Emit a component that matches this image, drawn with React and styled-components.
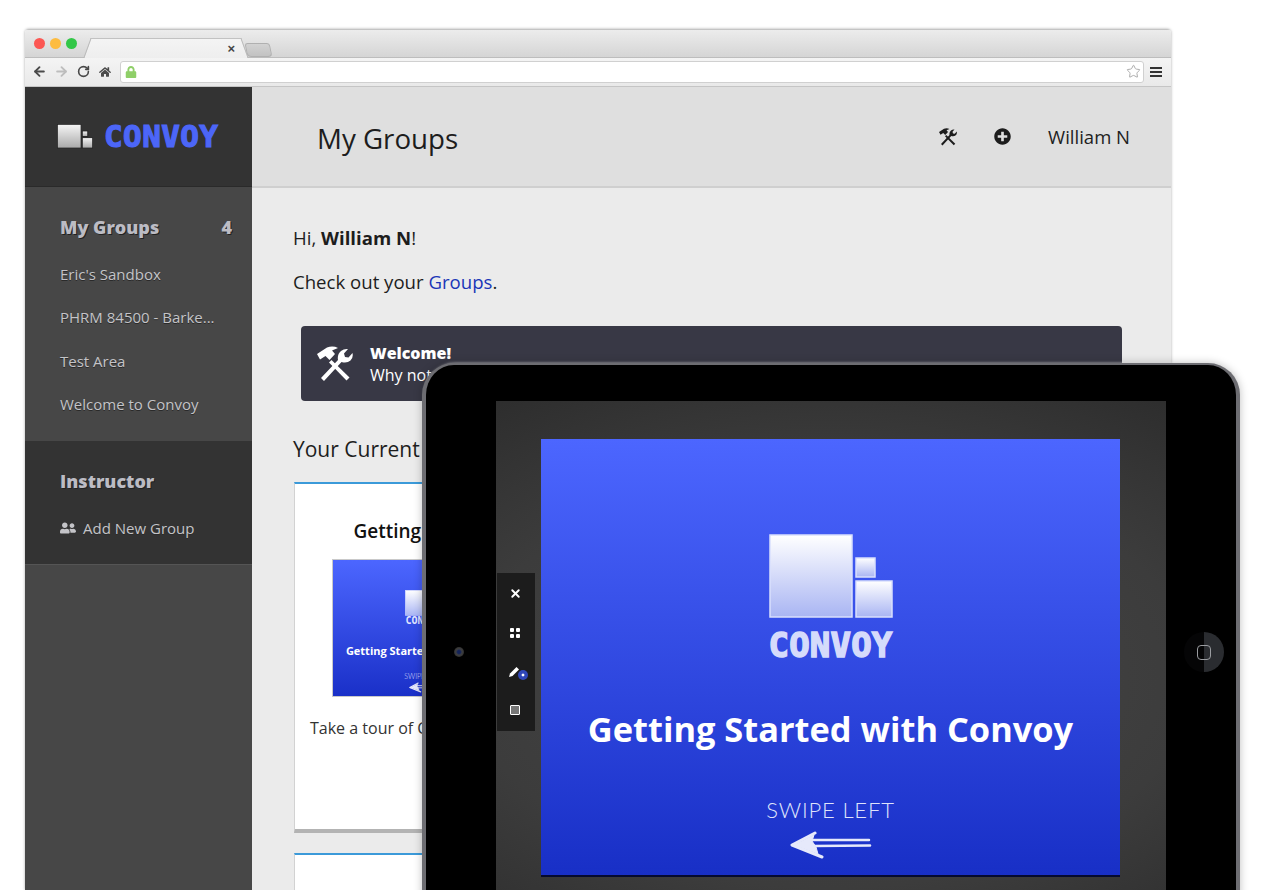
import React from 'react';
import styled, { createGlobalStyle } from 'styled-components';
import { ArrowLeft, ArrowRight, RotateCw, Star, X } from 'lucide-react';
import { FaHome, FaLock, FaPlusCircle, FaUserFriends } from 'react-icons/fa';

const GlobalStyle = createGlobalStyle`
  html, body {
    margin: 0;
    height: 890px;
    overflow: hidden;
    background: #fff;
    font-family: 'Open Sans', 'Liberation Sans', sans-serif;
  }
  * { box-sizing: border-box; }
`;

const LogoMark = ({ id, from, to, edge, width, edgeWidth = 1.5 }) => (
  <svg width={width} viewBox="0 0 124 84" style={{ display: 'block', flexShrink: 0 }}>
    <defs>
      <linearGradient id={id} x1="0" y1="0" x2="0" y2="1">
        <stop offset="0" stopColor={from} />
        <stop offset="1" stopColor={to} />
      </linearGradient>
    </defs>
    <g fill={`url(#${id})`} stroke={edge} strokeWidth={edgeWidth}>
      <rect x="1" y="1" width="82" height="82" />
      <rect x="87" y="24" width="19" height="19" />
      <rect x="87" y="47" width="36" height="36" />
    </g>
  </svg>
);

const ToolsIcon = ({ size }) => (
  <svg width={size} height={size} viewBox="0 0 36 36" fill="currentColor" style={{ display: 'block' }}>
    <path d="M0 8 L10 1.5 Q16 -0.5 21 2 L15 4.5 L18 8 L12.5 14 L8.5 10 L3 13.5 Z" />
    <path d="M12 16.5 L14.5 14 L32.5 31.5 L29.5 34.5 Z" />
    <path d="M4 32 L21 14 Q20 8.5 24 5 Q27 2.5 31 3 L27 7.5 L28 11 L31.5 11.5 L35.5 7 Q36.5 12 33.5 14.5 Q30 17.5 24.5 16 L7 35 Z" />
  </svg>
);

const SwipeArrow = ({ width }) => (
  <svg width={width} viewBox="0 0 82 30" fill="none" stroke="#e6e9fb" strokeLinecap="round" strokeLinejoin="round" style={{ display: 'block' }}>
    <path d="M25 3 L2 15 L32 27" strokeWidth="3" />
    <path d="M20 10 L79 10" strokeWidth="2.5" />
    <path d="M24 16 L80 15.5" strokeWidth="2.5" />
    <path d="M4 15 L24 5 L22 11 L26 17 L28 24 Z" fill="#e6e9fb" strokeWidth="1" />
  </svg>
);

const groups = [
  "Eric's Sandbox",
  'PHRM 84500 - Barke...',
  'Test Area',
  'Welcome to Convoy',
];

const App = () => (
  <Stage>
    <GlobalStyle />
    <Browser>
      <TitleBar>
        <Light color="#fc5753" />
        <Light color="#fdbc40" />
        <Light color="#33c748" />
        <Tab>
          <TabClose>×</TabClose>
        </Tab>
        <NewTab />
      </TitleBar>
      <Toolbar>
        <NavIcon>
          <ArrowLeft size={15} strokeWidth={3} color="#4a4a4a" />
        </NavIcon>
        <NavIcon>
          <ArrowRight size={15} strokeWidth={3} color="#bdbdbd" />
        </NavIcon>
        <NavIcon>
          <RotateCw size={13} strokeWidth={3} color="#4a4a4a" />
        </NavIcon>
        <NavIcon>
          <FaHome size={12} color="#4a4a4a" />
        </NavIcon>
        <AddressBar>
          <FaLock size={12} color="#8fcf68" />
          <Star size={15} strokeWidth={1.5} color="#a8a8a8" />
        </AddressBar>
        <Burger>
          <span />
          <span />
          <span />
        </Burger>
      </Toolbar>

      <AppBody>
        <Sidebar>
          <LogoArea>
            <LogoMark id="topLogo" from="#f6f6f6" to="#a9a9a9" edge="#1f1f1f" edgeWidth={3} width={36} />
            <LogoText>CONVOY</LogoText>
          </LogoArea>
          <NavSection>
            <NavHeading>
              My Groups <span>4</span>
            </NavHeading>
            {groups.map(g => (
              <NavItem key={g}>{g}</NavItem>
            ))}
          </NavSection>
          <InstructorSection>
            <NavHeading>Instructor</NavHeading>
            <NavItem>
              <FaUserFriends size={16} /> Add New Group
            </NavItem>
          </InstructorSection>
        </Sidebar>

        <Main>
          <Header>
            <PageTitle>My Groups</PageTitle>
            <HeaderActions>
              <ToolsIcon size={18} />
              <FaPlusCircle size={17} />
              <UserName>William N</UserName>
            </HeaderActions>
          </Header>
          <Content>
            <Greeting>
              Hi, <b>William N</b>!
            </Greeting>
            <Greeting>
              Check out your <GroupLink>Groups</GroupLink>.
            </Greeting>
            <Banner>
              <ToolsIcon size={36} />
              <BannerText>
                <b>Welcome!</b>
                <span>Why not take a tour?</span>
              </BannerText>
            </Banner>
            <SectionTitle>Your Current Groups</SectionTitle>
            <Card>
              <CardTitle>Getting Started</CardTitle>
              <Thumb>
                <LogoMark id="thumbLogo" from="#ffffff" to="#aab6f5" edge="#dfe4ff" width={38} />
                <ThumbLogoText>CONVOY</ThumbLogoText>
                <ThumbTitle>Getting Started with Convoy</ThumbTitle>
                <ThumbSwipe>SWIPE LEFT</ThumbSwipe>
                <SwipeArrow width={30} />
              </Thumb>
              <CardText>Take a tour of Convoy</CardText>
            </Card>
            <Card />
          </Content>
        </Main>
      </AppBody>
    </Browser>

    <Tablet>
      <Bezel>
        <Camera />
      </Bezel>
      <Screen>
        <SlideTools>
          <X size={13} strokeWidth={3.5} color="#fff" />
          <GridIcon>
            <i />
            <i />
            <i />
            <i />
          </GridIcon>
          <PenTool>
            <svg width="11" height="11" viewBox="0 0 11 11" fill="#fff">
              <path d="M0 11 L1 7.5 L7.5 1 L10 3.5 L3.5 10 Z" />
            </svg>
            <PenDot />
          </PenTool>
          <NotesIcon />
        </SlideTools>
        <Slide>
          <LogoMark id="slideLogo" from="#ffffff" to="#a9b5f3" edge="#d9dffd" width={124} />
          <SlideLogoText>CONVOY</SlideLogoText>
          <SlideTitle>Getting Started with Convoy</SlideTitle>
          <SwipeText>SWIPE LEFT</SwipeText>
          <SwipeArrow width={82} />
        </Slide>
      </Screen>
      <Bezel>
        <HomeButton>
          <i />
        </HomeButton>
      </Bezel>
    </Tablet>
  </Stage>
);

const Stage = styled.div`
  position: relative;
  height: 890px;
  overflow: hidden;
  padding: 29px 0 0 25px;
`;

const Browser = styled.div`
  width: 1146px;
  height: 861px;
  border-radius: 4px 4px 0 0;
  box-shadow: 0 0 3px rgba(0, 0, 0, 0.35);
  overflow: hidden;
`;

const TitleBar = styled.div`
  display: flex;
  align-items: center;
  height: 29px;
  padding-left: 9px;
  gap: 5px;
  background: linear-gradient(#ececec, #d5d5d5);
  border-top: 1px solid #c4c4c4;
  border-bottom: 1px solid #bdbdbd;
`;

const Light = styled.div`
  width: 11px;
  height: 11px;
  border-radius: 50%;
  background: ${props => props.color};
`;

const Tab = styled.div`
  position: relative;
  display: flex;
  align-items: center;
  justify-content: flex-end;
  align-self: flex-end;
  width: 148px;
  height: 20px;
  margin: 0 0 -1px 10px;
  padding-right: 5px;
  background: linear-gradient(#f4f4f4, #eeeeee);
  border-top: 1px solid #c2c2c2;

  &::before,
  &::after {
    content: '';
    position: absolute;
    top: -1px;
    bottom: 0;
    width: 10px;
    background: linear-gradient(#f4f4f4, #eeeeee);
    border-top: 1px solid #c2c2c2;
  }

  &::before {
    left: -5px;
    transform: skewX(-20deg);
    border-left: 1px solid #b9b9b9;
  }

  &::after {
    right: -5px;
    transform: skewX(20deg);
    border-right: 1px solid #b9b9b9;
  }
`;

const TabClose = styled.span`
  position: relative;
  z-index: 1;
  font: 700 13px 'Liberation Sans', sans-serif;
  color: #444;
`;

const NewTab = styled.div`
  width: 25px;
  height: 14px;
  margin: 12px 0 0 1px;
  border: 1px solid #b0b0b0;
  border-radius: 3px 3px 4px 4px;
  background: linear-gradient(#d2d2d2, #c2c2c2);
  transform: skewX(12deg);
`;

const Toolbar = styled.div`
  display: flex;
  align-items: center;
  height: 29px;
  padding: 0 8px 1px 3px;
  background: linear-gradient(#f4f4f4, #e9e9e9);
  border-bottom: 1px solid #c5c5c5;
`;

const NavIcon = styled.div`
  display: flex;
  justify-content: center;
  width: 22px;
`;

const AddressBar = styled.div`
  display: flex;
  align-items: center;
  justify-content: space-between;
  width: 1024px;
  height: 22px;
  margin-left: 4px;
  padding: 0 2px 0 4px;
  background: #fff;
  border: 1px solid #d0d0d0;
  border-radius: 3px;
`;

const Burger = styled.div`
  display: flex;
  flex-direction: column;
  gap: 2px;
  margin-left: 6px;

  span {
    display: block;
    width: 12px;
    height: 2px;
    background: #333;
  }
`;

const AppBody = styled.div`
  display: flex;
  height: 803px;
`;

const Sidebar = styled.aside`
  display: flex;
  flex-direction: column;
  flex: 0 0 227px;
  background: #474747;
`;

const LogoArea = styled.div`
  display: flex;
  align-items: center;
  gap: 11px;
  height: 100px;
  padding-left: 32px;
  background: #333;
  border-bottom: 1px solid #2a2a2a;
`;

const LogoText = styled.div`
  font: 700 31px/1 'DejaVu Sans Mono', monospace;
  letter-spacing: 0.4px;
  color: #4c66f8;
  -webkit-text-stroke: 1.2px #4c66f8;
`;

const NavSection = styled.nav`
  height: 254px;
  padding-top: 18px;
`;

const InstructorSection = styled.nav`
  height: 124px;
  padding-top: 18px;
  background: #333;
  border-bottom: 1px solid #555;
`;

const NavHeading = styled.div`
  display: flex;
  justify-content: space-between;
  height: 47px;
  padding: 0 20px 0 35px;
  font-size: 18px;
  font-weight: 800;
  line-height: 44px;
  color: #bcbcc4;
  text-shadow: 1px 1px 0 #222;
`;

const NavItem = styled.div`
  display: flex;
  align-items: center;
  gap: 7px;
  height: 43.5px;
  padding-left: 35px;
  font-size: 15px;
  color: #c4c4c8;
  text-shadow: 0 1px 0 #2a2a2a;
`;

const Main = styled.main`
  flex: 1;
  min-width: 0;
  background: #ebebeb;
`;

const Header = styled.header`
  display: flex;
  align-items: center;
  justify-content: space-between;
  height: 101px;
  padding: 0 41px 0 65px;
  background: #dfdfdf;
  border-bottom: 2px solid #cfcfcf;
`;

const PageTitle = styled.h1`
  margin: 3px 0 0;
  font-size: 27.7px;
  font-weight: 400;
  color: #1d1d1d;
`;

const HeaderActions = styled.div`
  display: flex;
  align-items: center;
  gap: 37px;
  color: #1d1d1d;
`;

const UserName = styled.span`
  font-size: 18.5px;
`;

const Content = styled.div`
  padding: 35px 41px 0;
`;

const Greeting = styled.p`
  margin: 0 0 14px;
  font-size: 18.6px;
  line-height: 30px;
  color: #1d1d1d;
`;

const GroupLink = styled.a`
  color: #1a36b8;
`;

const Banner = styled.div`
  display: flex;
  align-items: center;
  gap: 17px;
  height: 75px;
  margin: 29px 8px 0;
  padding-left: 16px;
  background: #383845;
  border-radius: 4px;
  color: #fff;
`;

const BannerText = styled.div`
  display: flex;
  flex-direction: column;
  font-size: 16px;
  line-height: 22px;

  b {
    font-weight: 800;
  }
`;

const SectionTitle = styled.h2`
  margin: 33px 0 18px;
  font-size: 21px;
  font-weight: 400;
  line-height: 30px;
  color: #1d1d1d;
`;

const Card = styled.div`
  display: flex;
  flex-direction: column;
  align-items: center;
  width: 259px;
  height: 351px;
  margin: 0 0 20px 1px;
  padding: 34px 16px 0;
  background: #fff;
  border: 1px solid #d2d2d2;
  border-top: 2px solid #3b9ad9;
  border-bottom: 4px solid #b3b3b3;
`;

const CardTitle = styled.div`
  height: 41px;
  font-size: 19px;
  font-weight: 600;
  line-height: 26px;
  text-align: center;
  color: #111;
`;

const Thumb = styled.div`
  display: flex;
  flex-direction: column;
  align-items: center;
  flex: 0 0 138px;
  width: 184px;
  padding-top: 30px;
  color: #fff;
  background: linear-gradient(#4c66ff, #1a30c8);
  border: 1px solid #c9c9c9;
`;

const ThumbLogoText = styled.div`
  font: 700 10px/1 'DejaVu Sans Mono', monospace;
  color: #e2e6ff;
`;

const ThumbTitle = styled.div`
  margin-top: 17px;
  font-size: 11px;
  font-weight: 700;
  white-space: nowrap;
`;

const ThumbSwipe = styled.div`
  margin: 14px 0 2px;
  font-family: 'Lato', sans-serif;
  font-size: 7px;
  font-weight: 300;
  color: #d8defc;
`;

const CardText = styled.div`
  align-self: flex-start;
  margin: 19px 0 0 -1px;
  font-size: 16px;
  line-height: 24px;
  white-space: nowrap;
  color: #333;
`;

const Tablet = styled.div`
  position: absolute;
  top: 363px;
  left: 422px;
  display: flex;
  width: 818px;
  height: 576px;
  padding: 36px 0;
  background: #000;
  border: solid #6d6d72;
  border-width: 2px 4px 0;
  border-radius: 32px;
  box-shadow: 0 0 9px rgba(0, 0, 0, 0.25), 2px 0 3px rgba(255, 255, 255, 0.8);
`;

const Bezel = styled.div`
  display: flex;
  align-items: center;
  justify-content: center;
  flex: 0 0 70px;
`;

const Camera = styled.div`
  width: 10px;
  height: 10px;
  margin-right: 5px;
  border-radius: 50%;
  background: radial-gradient(#13235a 20%, #3f3f3f 45%, #1c1c1c);
`;

const HomeButton = styled.div`
  display: flex;
  align-items: center;
  justify-content: center;
  width: 40px;
  height: 40px;
  margin-left: 6px;
  border-radius: 50%;
  background: linear-gradient(90deg, #050506 50%, #2a2c30 50%);

  i {
    width: 14px;
    height: 15px;
    border: 1.5px solid #9a9ca0;
    border-radius: 4px;
  }
`;

const Screen = styled.div`
  position: relative;
  flex: 1;
  padding-top: 38px;
  background: radial-gradient(ellipse 90% 70% at 50% 55%, #474747, #3c3c3c 60%, #2c2c2c 100%);
`;

const SlideTools = styled.div`
  position: absolute;
  top: 172px;
  left: 1px;
  display: flex;
  flex-direction: column;
  align-items: center;
  justify-content: space-around;
  width: 38px;
  height: 158px;
  padding: 0 2px 2px 0;
  background: #1c1c1c;
`;

const GridIcon = styled.div`
  display: grid;
  grid-template-columns: 4px 4px;
  gap: 2px;

  i {
    width: 4px;
    height: 4px;
    background: #fff;
    border-radius: 1px;
  }
`;

const PenTool = styled.div`
  position: relative;
  display: flex;
  margin-left: -2px;
`;

const PenDot = styled.div`
  position: absolute;
  top: 4px;
  left: 9px;
  width: 10px;
  height: 10px;
  border-radius: 50%;
  background: radial-gradient(#fff 15%, #2f46b8 25%);
`;

const NotesIcon = styled.div`
  width: 10px;
  height: 10px;
  border: 1.5px solid #fff;
  border-radius: 1px;
  background: #777;
`;

const Slide = styled.div`
  display: flex;
  flex-direction: column;
  align-items: center;
  width: 579px;
  height: 438px;
  margin-left: 45px;
  padding-top: 95px;
  background: linear-gradient(#4c66ff, #182fc6);
  border-bottom: 2px solid #050a30;
`;

const SlideLogoText = styled.div`
  margin-top: 10px;
  font: 700 34px/1 'DejaVu Sans Mono', monospace;
  letter-spacing: 0.2px;
  color: #d5dbfb;
  -webkit-text-stroke: 1.5px #d5dbfb;
`;

const SlideTitle = styled.div`
  margin-top: 44px;
  font-size: 34.4px;
  font-weight: 700;
  line-height: 46px;
  white-space: nowrap;
  color: #fff;
`;

const SwipeText = styled.div`
  margin: 45px 0 7px;
  font-family: 'Lato', sans-serif;
  font-size: 22px;
  font-weight: 300;
  line-height: 26px;
  letter-spacing: 0.8px;
  color: #dfe3fb;
`;

export default App;
